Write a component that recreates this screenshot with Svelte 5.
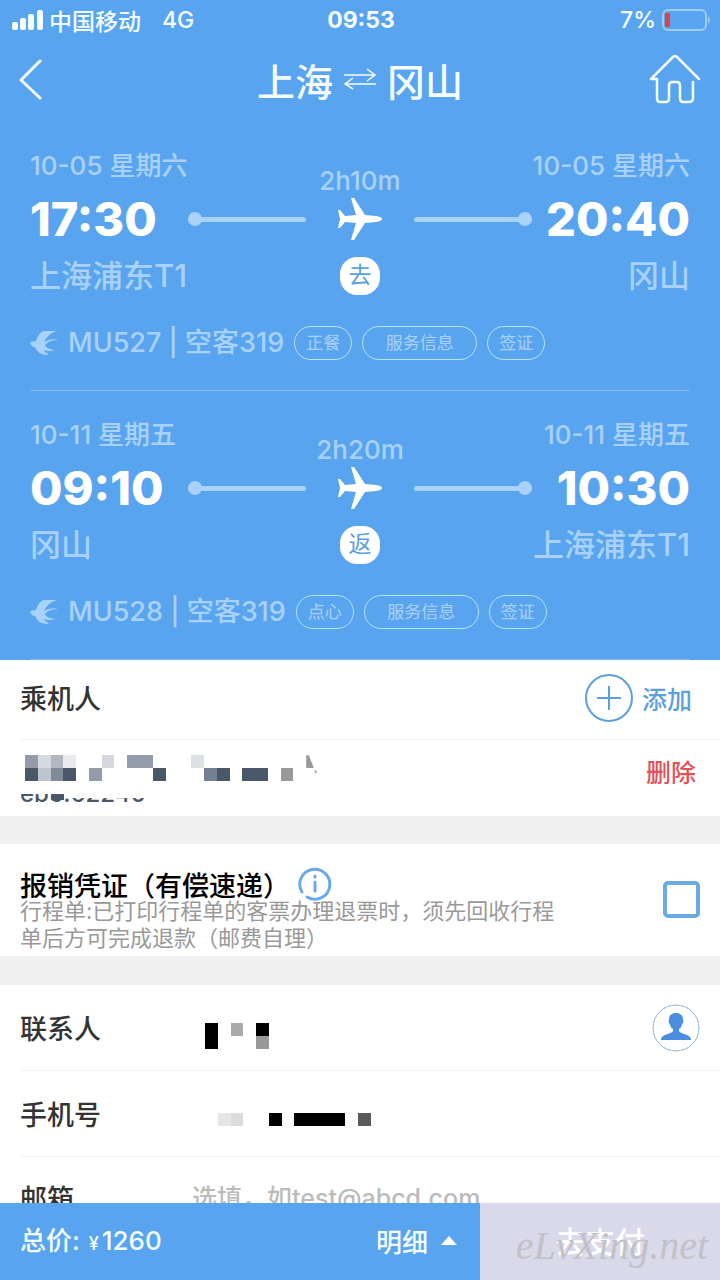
<script>
  const legs = [
    {
      date: '10-05 星期六',
      depart: '17:30',
      from: '上海浦东T1',
      arrive: '20:40',
      to: '冈山',
      duration: '2h10m',
      badge: '去',
      flight: 'MU527 | 空客319',
      tags: ['正餐', '服务信息', '签证']
    },
    {
      date: '10-11 星期五',
      depart: '09:10',
      from: '冈山',
      arrive: '10:30',
      to: '上海浦东T1',
      duration: '2h20m',
      badge: '返',
      flight: 'MU528 | 空客319',
      tags: ['点心', '服务信息', '签证']
    }
  ];

  // masked values: [column, row, width, height, colour] in cells
  const nameMask = [
    [0, 0, 1, 1, '#939ca8'], [1, 0, 1, 1, '#d5d9e0'], [2, 0, 1, 1, '#b2b8c2'], [3, 0, 1, 1, '#e9ebef'],
    [0, 1, 1, 1, '#4a5769'], [1, 1, 1, 1, '#bfc4cd'], [2, 1, 1, 1, '#808b9a'], [3, 1, 1, 1, '#4a5769'],
    [6, 0, 1, 1, '#d5d8de'], [5, 1, 1, 1, '#939ca8'], [8, 0, 2, 1, '#939ca8'], [10, 1, 1, 1, '#4a5769'],
    [13, 0, 1, 1, '#dde0e5'], [14, 1, 1, 1, '#748091'], [15, 1, 1, 1, '#4a5769'], [17, 1, 2, 1, '#4a5769'],
    [20, 1, 1, 1, '#999999']
  ];
  const contactMask = [
    [0, 0, 1, 2, '#000'], [2, 0, 1, 1, '#aaa'], [4, 0, 1, 1, '#000'], [4, 1, 1, 1, '#999']
  ];
  const phoneMask = [
    [1, 0, 1, 1, '#e6e6e6'], [2, 0, 1, 1, '#dcdcdc'], [5, 0, 1, 1, '#000'], [7, 0, 4, 1, '#000'], [12, 0, 1, 1, '#5a5a5a']
  ];

  let email = '';
  let voucher = false;
</script>

<div class="app">
  <div class="content">
    <header>
      <div class="status">
        <div class="carrier">
          <svg width="31" height="20" viewBox="0 0 31 20" fill="#f4fdff" aria-hidden="true">
            <rect x="0" y="12" width="6" height="8" rx="2" />
            <rect x="8" y="8" width="6" height="12" rx="2" />
            <rect x="16" y="4" width="6" height="16" rx="2" />
            <rect x="25" y="0" width="6" height="20" rx="2" />
          </svg>
          <span>中国移动</span>
          <span class="network">4G</span>
        </div>
        <div class="clock">09:53</div>
        <div class="power">
          <span>7%</span>
          <svg width="48" height="22" viewBox="0 0 48 22" aria-hidden="true">
            <rect x="1" y="1" width="43" height="20" rx="5" fill="none" stroke="#9dcdf8" stroke-width="2" />
            <rect x="3" y="4" width="5" height="14" rx="1" fill="#d9444f" />
            <path d="M46 7q4 4 0 8z" fill="#9dcdf8" />
          </svg>
        </div>
      </div>
      <nav>
        <button class="icon back" aria-label="返回">
          <svg width="24" height="42" viewBox="0 0 24 42" fill="none" stroke="#f4fdff" stroke-width="3" stroke-linecap="round" stroke-linejoin="round">
            <path d="M21 3L2 22l19 18" />
          </svg>
        </button>
        <h1>
          上海
          <svg width="34" height="22" viewBox="0 0 34 22" fill="none" stroke="#f4fdff" stroke-width="1.5">
            <path d="M1 7h31M24 1l8 6-8 6M33 16H2M10 10l-8 6 8 5" />
          </svg>
          冈山
        </h1>
        <button class="icon" aria-label="首页">
          <svg width="52" height="52" viewBox="0 0 52 52" fill="none" stroke="#f4fdff" stroke-width="2.5" stroke-linecap="round" stroke-linejoin="round">
            <path d="M50 26L28 4q-2-2-4 0L2 26h6v19q0 4 3 4h6q3 0 3-4V33q0-4 3-4h5q3 0 3 4v12q0 4 3 4h6q4 0 4-4V29" />
          </svg>
        </button>
      </nav>
    </header>

    {#each legs as leg}
      <section class="leg">
        <div class="route">
          <div class="stop">
            <div class="date">{leg.date}</div>
            <div class="time">{leg.depart}</div>
            <div class="airport">{leg.from}</div>
          </div>
          <div class="middle">
            <div class="duration">{leg.duration}</div>
            <div class="track">
              <span class="line start"></span>
              <svg width="46" height="44" viewBox="0 0 46 44" fill="#fff" aria-hidden="true">
                <path d="M14 1h3l11 17 11 1q6 1 6 3t-6 3l-11 1-11 17h-3l5-17-11-1-5 6H1l2-9-2-9h2l5 6 11-1z" />
              </svg>
              <span class="line end"></span>
            </div>
            <div class="badge">{leg.badge}</div>
          </div>
          <div class="stop right">
            <div class="date">{leg.date}</div>
            <div class="time">{leg.arrive}</div>
            <div class="airport">{leg.to}</div>
          </div>
        </div>
        <div class="info">
          <svg width="28" height="24" viewBox="0 0 28 24" fill="#a9d2fb" aria-hidden="true">
            <path d="M27 0H14Q9 1 6 10L0 11q1 5 5 5 2 7 12 8l2-1q-4-1-5-4 5 2 11 0-9-1-10-5 4-5 13-5-7-2-14 2Q17 3 27 0z" />
          </svg>
          <span class="flight">{leg.flight}</span>
          {#each leg.tags as tag}
            <button class="tag" class:wide={tag.length > 2}>{tag}</button>
          {/each}
        </div>
      </section>
    {/each}

    <section class="passengers">
      <div class="row head">
        <h2>乘机人</h2>
        <button class="add">
          <svg width="48" height="48" viewBox="0 0 48 48" fill="none" stroke="#5b9fdc" stroke-width="2" aria-hidden="true">
            <circle cx="24" cy="24" r="23" />
            <path d="M24 12v24M12 24h24" />
          </svg>
          添加
        </button>
      </div>
      <div class="row passenger">
        <div>
          <svg class="name" width="294" height="26" viewBox="0 0 23 2" shape-rendering="crispEdges" aria-label="乘机人姓名">
            {#each nameMask as [x, y, w, h, fill]}
              <rect {x} {y} width={w} height={h} {fill} />
            {/each}
            <path d="M22 0h.2L22.6 1H22zM22.6 1.2h.2v.3z" fill="#999" shape-rendering="auto" />
          </svg>
          <div class="document"><span>eb5.</span><span class="tail">62240</span></div>
        </div>
        <button class="delete">删除</button>
      </div>
    </section>

    <section class="voucher">
      <div>
        <h2>
          <label for="voucher">报销凭证（有偿速递）</label>
          <svg width="34" height="34" viewBox="0 0 34 34" fill="none" stroke="#6aaae6" stroke-width="3" stroke-linecap="round" aria-hidden="true">
            <path d="M4 25A15 15 0 1 1 9 30" />
            <path d="M17 15v9M17 9v1" />
          </svg>
        </h2>
        <p>行程单:已打印行程单的客票办理退票时，须先回收行程<br />单后方可完成退款（邮费自理）</p>
      </div>
      <input id="voucher" type="checkbox" bind:checked={voucher} />
    </section>

    <section class="contact">
      <div class="row">
        <span class="label">联系人</span>
        <svg class="value" width="64" height="26" viewBox="0 0 5 2" shape-rendering="crispEdges" aria-label="联系人姓名">
          {#each contactMask as [x, y, w, h, fill]}
            <rect {x} {y} width={w} height={h} {fill} />
          {/each}
        </svg>
        <button class="icon" aria-label="选择联系人">
          <svg width="48" height="48" viewBox="0 0 48 48">
            <circle cx="24" cy="24" r="23" fill="none" stroke="#8fb3d0" stroke-width="1" />
            <path d="M24 9c5 0 7 3 7 7 1 1 0 4-1 4 0 2-1 4-3 5v2c1 3 11 3 12 8v1H9v-1c1-5 11-5 12-8v-2c-2-1-3-3-3-5-1 0-2-3-1-4 0-4 2-7 7-7z" fill="#4a8fdf" />
          </svg>
        </button>
      </div>
      <div class="row">
        <span class="label">手机号</span>
        <svg class="value phone" width="166" height="13" viewBox="0 0 13 1" shape-rendering="crispEdges" aria-label="手机号码">
          {#each phoneMask as [x, y, w, h, fill]}
            <rect {x} {y} width={w} height={h} {fill} />
          {/each}
        </svg>
      </div>
      <div class="row">
        <label class="label" for="email">邮箱</label>
        <input id="email" type="email" placeholder="选填，如test@abcd.com" bind:value={email} />
      </div>
    </section>
  </div>

  <footer>
    <div class="total">总价: <small>¥</small> <span>1260</span></div>
    <button class="detail">
      明细
      <svg width="16" height="9" viewBox="0 0 16 9" fill="#fff" aria-hidden="true"><path d="M0 9l8-9 8 9z" /></svg>
    </button>
    <button class="pay">
      去支付
      <span class="watermark">eLvXing.net</span>
    </button>
  </footer>
</div>

<style>
  :global(body) {
    margin: 0;
  }

  .app {
    display: flex;
    flex-direction: column;
    height: 100vh;
    background: #fff;
    color: #333;
    font-family: Inter, 'Noto Sans CJK SC', sans-serif;
    font-size: 27px;
  }

  .content {
    flex: 1;
    min-height: 0;
    overflow: hidden;
  }

  button,
  input {
    margin: 0;
    padding: 0;
    border: 0;
    background: none;
    color: inherit;
    font: inherit;
  }

  svg {
    display: block;
    flex: none;
  }

  h1,
  h2,
  p {
    margin: 0;
    font-size: 27px;
    font-weight: 500;
  }

  header,
  .leg {
    background: #59a4ef;
    color: #f4fdff;
  }

  .status {
    display: grid;
    grid-template-columns: 1fr auto 1fr;
    align-items: center;
    height: 40px;
    padding: 0 10px 0 12px;
    font-size: 23px;
    font-weight: 500;
  }

  .carrier,
  .power {
    display: flex;
    align-items: center;
    gap: 6px;
  }

  .network {
    margin-left: 15px;
  }

  .clock {
    font-weight: 700;
  }

  .power {
    justify-content: flex-end;
  }

  nav {
    display: flex;
    align-items: center;
    justify-content: space-between;
    height: 78px;
    padding: 0 19px 4px;
  }

  .back {
    width: 52px;
  }

  h1 {
    display: flex;
    align-items: center;
    gap: 10px;
    font-size: 38px;
    font-weight: 500;
  }

  .leg {
    padding: 28px 30px 0;
  }

  .route {
    display: grid;
    grid-template-columns: 1fr 52% 1fr;
  }

  .stop {
    white-space: nowrap;
    color: #a9d2fb;
  }

  .right {
    display: flex;
    flex-direction: column;
    align-items: flex-end;
  }

  .date,
  .duration {
    font-size: 26px;
    font-weight: 500;
    line-height: 32px;
  }

  .time {
    color: #fff;
    font-size: 47px;
    font-weight: 800;
    line-height: 74px;
  }

  .airport {
    font-size: 31px;
    font-weight: 500;
    line-height: 40px;
  }

  .middle {
    display: flex;
    flex-direction: column;
    align-items: center;
    padding-top: 15px;
    color: #a9d2fb;
  }

  .track {
    display: flex;
    align-items: center;
    gap: 31px;
    width: 100%;
    height: 44px;
  }

  .line {
    display: flex;
    flex: 1;
    align-items: center;
    height: 5px;
    border-radius: 3px;
    background: #a9d2fb;
  }

  .line::before {
    content: '';
    width: 14px;
    height: 14px;
    border-radius: 50%;
    background: #a9d2fb;
  }

  .end {
    justify-content: flex-end;
  }

  .badge {
    width: 40px;
    height: 38px;
    margin-top: 16px;
    border-radius: 17px;
    background: #fff;
    color: #5b9fdc;
    font-size: 23px;
    line-height: 37px;
    text-align: center;
  }

  .info {
    display: flex;
    align-items: center;
    gap: 10px;
    margin-top: 30px;
    padding-bottom: 30px;
    border-bottom: 1px solid #80bbf5;
  }

  .flight {
    color: #a9d2fb;
    font-size: 27px;
    font-weight: 500;
    line-height: 34px;
    white-space: nowrap;
  }

  .tag {
    box-sizing: border-box;
    width: 58px;
    height: 34px;
    border: 1px solid #b4e3fa;
    border-radius: 17px;
    color: #a9d2fb;
    font-size: 17px;
    line-height: 32px;
  }

  .wide {
    width: 115px;
  }

  .row {
    display: flex;
    align-items: center;
    box-sizing: border-box;
    height: 86px;
    margin-left: 20px;
    padding-right: 20px;
    border-bottom: 1px solid #f3f3f3;
  }

  .head {
    justify-content: space-between;
    height: 80px;
    padding: 0 28px 4px 0;
  }

  .add {
    display: flex;
    align-items: center;
    gap: 9px;
    color: #5b9fdc;
    font-size: 25px;
    font-weight: 500;
  }

  .passenger {
    align-items: flex-start;
    justify-content: space-between;
    height: 76px;
    padding: 15px 24px 0 0;
    border: 0;
  }

  .name {
    margin-left: 5px;
  }

  /* the document number is hidden except for its lower edge */
  .document {
    position: relative;
    display: flex;
    align-items: flex-end;
    height: 8px;
    margin-top: 13px;
    color: #4a5769;
    font-size: 24px;
    font-weight: 500;
    line-height: 16px;
  }

  .document::before {
    content: '';
    position: absolute;
    top: 0;
    left: 31px;
    width: 13px;
    height: 6px;
    background: #4a5769;
  }

  .document span {
    display: flex;
    align-items: flex-end;
    height: 8px;
    overflow: hidden;
  }

  .document .tail {
    height: 4px;
  }

  .delete {
    color: #e25058;
    font-size: 25px;
    font-weight: 500;
    line-height: 36px;
  }

  .voucher {
    display: flex;
    align-items: flex-start;
    justify-content: space-between;
    padding: 26px 20px 4px;
    border: solid #f0f0f0;
    border-width: 28px 0 29px;
  }

  .voucher h2 {
    display: flex;
    align-items: center;
    gap: 8px;
    height: 28px;
    color: #000;
  }

  .voucher p {
    color: #999;
    font-size: 22px;
    font-weight: 400;
    line-height: 27px;
    white-space: nowrap;
  }

  .voucher input {
    appearance: none;
    flex: none;
    width: 37px;
    height: 37px;
    margin-top: 11px;
    border: 4px solid #6aaae0;
    border-radius: 5px;
  }

  .voucher input:checked {
    background: #6aaae0;
  }

  .label {
    flex: none;
    width: 172px;
    font-weight: 500;
  }

  .value {
    margin: 16px auto 0 13px;
  }

  .phone {
    margin-top: 12px;
  }

  .contact input {
    flex: 1;
    min-width: 0;
    font-size: 25px;
    font-weight: 500;
  }

  .contact input::placeholder {
    color: #bbb;
    opacity: 1;
  }

  .contact .row:last-child {
    padding-bottom: 4px;
  }

  footer {
    display: flex;
    height: 77px;
    background: #59a4ef;
    color: #f4fdff;
    font-size: 26px;
    font-weight: 500;
  }

  .total {
    flex: 1;
    padding-left: 20px;
    line-height: 76px;
  }

  small {
    margin-left: 2px;
    font-size: 18px;
  }

  .total span {
    margin-left: -4px;
  }

  .detail {
    display: flex;
    align-items: center;
    gap: 13px;
    padding: 0 23px 3px;
  }

  .pay {
    position: relative;
    width: 33.33%;
    padding-bottom: 3px;
    background: #d9d9e9;
    color: #fff;
    font-size: 30px;
  }

  .watermark {
    position: absolute;
    right: 12px;
    bottom: 14px;
    color: #c1c1c7;
    font-family: 'Liberation Serif', serif;
    font-size: 40px;
    font-style: italic;
    font-weight: 400;
    line-height: 40px;
  }
</style>
